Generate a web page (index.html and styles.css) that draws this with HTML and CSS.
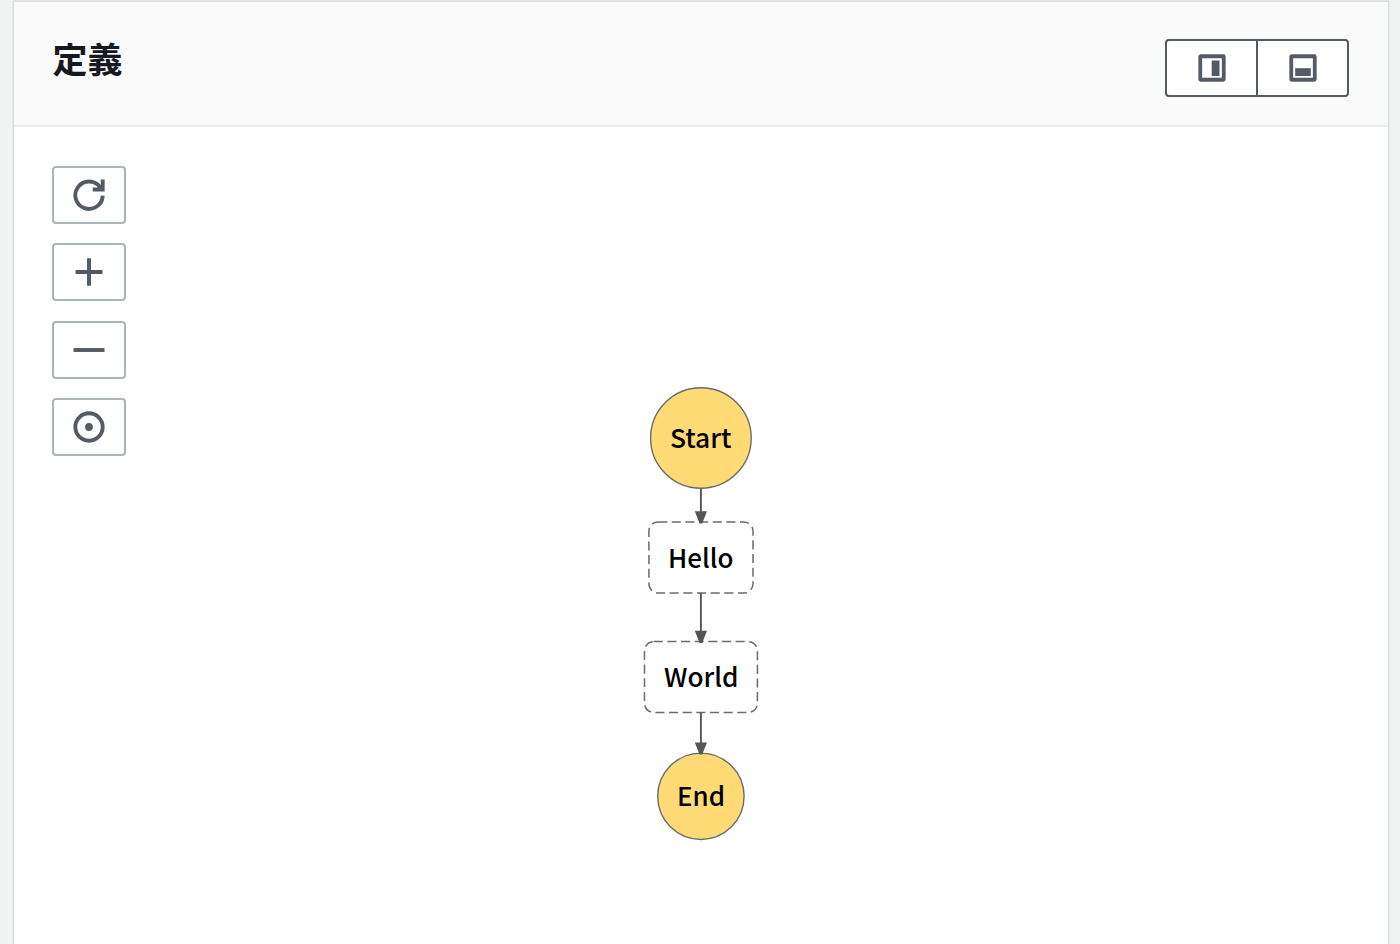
FILE: index.html
```
<!DOCTYPE html>
<html lang="ja">
<head>
<meta charset="utf-8">
<title>定義</title>
<link rel="stylesheet" href="styles.css">
</head>
<body>
<section class="panel">
  <header class="panel-header">
    <h2 class="title">定義</h2>
    <div class="segmented">
      <button class="segment" aria-label="Side layout">
        <svg width="28" height="28" viewBox="0 0 28 28"><rect class="frame" x="2.25" y="2.25" width="23.5" height="23.5" rx=".5"/><rect class="solid" x="13.7" y="6.5" width="7.8" height="15.5"/></svg>
      </button>
      <button class="segment" aria-label="Bottom layout">
        <svg width="28" height="28" viewBox="0 0 28 28"><rect class="frame" x="2.25" y="2.25" width="23.5" height="23.5" rx=".5"/><rect class="solid" x="6.2" y="14.2" width="15.6" height="7.8"/></svg>
      </button>
    </div>
  </header>
  <div class="canvas">
    <div class="tools">
      <button class="tool" aria-label="Refresh"><svg width="34" height="34" viewBox="0 0 34 34"><path class="line" d="M30.7 17.6A13.7 13.7 0 1 1 28.1 9.2L30 12M30.7 1.5V11.5H20.7"/></svg></button>
      <button class="tool" aria-label="Zoom in"><svg width="34" height="34" viewBox="0 0 34 34"><path class="line" d="M3.5 17H30.5M17 3.3V30.7"/></svg></button>
      <button class="tool" aria-label="Zoom out"><svg width="34" height="34" viewBox="0 0 34 34"><path class="line" d="M1.5 17H32.5"/></svg></button>
      <button class="tool" aria-label="Center"><svg width="34" height="34" viewBox="0 0 34 34"><circle class="line" cx="17" cy="17" r="13.7"/><circle class="solid" cx="17" cy="17" r="3.9"/></svg></button>
    </div>
    <svg class="graph" width="120" height="460" viewBox="641 384 120 460">
      <circle class="terminal" cx="700.9" cy="438" r="50.3"/>
      <rect class="state" x="648.9" y="522" width="104.1" height="71" rx="9.2"/>
      <rect class="state" x="644.5" y="641.6" width="112.9" height="70.8" rx="9.2"/>
      <circle class="terminal" cx="700.9" cy="796.3" r="43.2"/>
      <path class="edge" d="M700.9 488.5V515M700.9 593V634M700.9 712.5V746"/>
      <path class="arrow" d="M694.8 511.2H707L702.2 523.5H699.6ZM694.8 630.7H707L702.2 643H699.6ZM694.8 742.5H707L702.2 754.5H699.6Z"/>
      <text class="label" x="670" y="448" textLength="61.5" lengthAdjust="spacingAndGlyphs">Start</text>
      <text class="label" x="668" y="567.6" textLength="65.5" lengthAdjust="spacingAndGlyphs">Hello</text>
      <text class="label" x="664" y="687" textLength="74.5" lengthAdjust="spacingAndGlyphs">World</text>
      <text class="label" x="677" y="806.4" textLength="48" lengthAdjust="spacingAndGlyphs">End</text>
    </svg>
  </div>
</section>
</body>
</html>
```
FILE: styles.css
```
* { box-sizing: border-box; }
body {
  margin: 0;
  height: 944px;
  overflow: hidden;
  padding: 2px 12px 0 14px;
  background: #f1f3f3;
  font-family: "Noto Sans CJK JP", sans-serif;
}
.panel {
  height: 942px;
  background: #fff;
  box-shadow: 0 0 0 1.5px #dadfdf, 0 -1px 0 1px #e7eaea;
}
.panel-header {
  display: flex;
  justify-content: space-between;
  align-items: flex-start;
  height: 124.5px;
  padding: 37px 39px 0;
  background: #fafafa;
  border-bottom: 2px solid #eaeded;
}
.title {
  margin: -1px 0 0 -.5px;
  font-size: 35px;
  line-height: 40px;
  font-weight: 700;
  color: #16191f;
}
.segmented {
  display: flex;
  width: 184px;
  height: 58px;
  border: 2px solid #545b64;
  border-radius: 4px;
  background: #fff;
}
.segment {
  flex: 1;
  display: flex;
  align-items: center;
  justify-content: center;
  padding: 0;
  border: 0;
  background: none;
}
.segment + .segment { border-left: 2px solid #545b64; }
.frame { fill: none; stroke: #545b64; stroke-width: 3.8; }
.solid { fill: #545b64; }
.line { fill: none; stroke: #545b64; stroke-width: 3.9; }
.canvas {
  display: grid;
  grid-template-columns: 74px 1fr;
  padding: 39px 38.4px 0;
}
.tools {
  display: flex;
  flex-direction: column;
  gap: 19.6px;
}
.tool {
  display: flex;
  align-items: center;
  justify-content: center;
  width: 74px;
  height: 58px;
  padding: 0;
  border: 2px solid #aab7b8;
  border-radius: 4px;
  background: #fff;
}
.graph { margin: 218.5px 0 0 514.6px; }
.terminal { fill: #ffda75; stroke: #6b6b6b; stroke-width: 1.4; }
.state { fill: #fff; stroke: #6b6b6b; stroke-width: 1.5; stroke-dasharray: 9.1 4.55; }
.edge { fill: none; stroke: #555; stroke-width: 1.9; }
.arrow { fill: #555; }
.label { font-size: 26px; font-weight: 500; fill: #000; }
```
